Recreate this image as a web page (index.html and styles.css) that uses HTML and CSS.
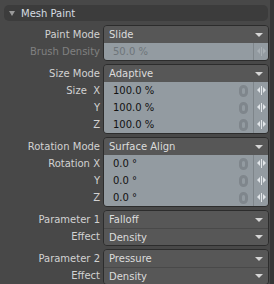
FILE: index.html
```html
<!DOCTYPE html>
<html lang="en">
<head>
    <meta charset="UTF-8">
    <title>Mesh Paint</title>
    <link rel="stylesheet" href="styles.css">
</head>
<body>
    <div class="panel">
        <div class="header"><span class="caret"></span>Mesh Paint</div>

        <div class="group">
            <div class="labels">
                <div class="label">Paint Mode</div>
                <div class="label dim">Brush Density</div>
            </div>
            <div class="box">
                <div class="row drop">Slide<span class="arrow"></span></div>
                <div class="row value disabled">50.0 %<span class="spin"><span class="arrows"></span></span></div>
            </div>
        </div>

        <div class="group">
            <div class="labels">
                <div class="label">Size Mode</div>
                <div class="label">Size&nbsp;&nbsp;X</div>
                <div class="label">Y</div>
                <div class="label">Z</div>
            </div>
            <div class="box">
                <div class="row drop">Adaptive<span class="arrow"></span></div>
                <div class="row value">100.0 %<span class="key"></span><span class="spin"><span class="arrows"></span></span></div>
                <div class="row value">100.0 %<span class="key"></span><span class="spin"><span class="arrows"></span></span></div>
                <div class="row value">100.0 %<span class="key"></span><span class="spin"><span class="arrows"></span></span></div>
            </div>
        </div>

        <div class="group">
            <div class="labels">
                <div class="label">Rotation Mode</div>
                <div class="label">Rotation X</div>
                <div class="label">Y</div>
                <div class="label">Z</div>
            </div>
            <div class="box">
                <div class="row drop">Surface Align<span class="arrow"></span></div>
                <div class="row value">0.0 °<span class="key"></span><span class="spin"><span class="arrows"></span></span></div>
                <div class="row value">0.0 °<span class="key"></span><span class="spin"><span class="arrows"></span></span></div>
                <div class="row value">0.0 °<span class="key"></span><span class="spin"><span class="arrows"></span></span></div>
            </div>
        </div>

        <div class="group">
            <div class="labels">
                <div class="label">Parameter 1</div>
                <div class="label">Effect</div>
            </div>
            <div class="box">
                <div class="row drop">Falloff<span class="arrow"></span></div>
                <div class="row drop">Density<span class="arrow"></span></div>
            </div>
        </div>

        <div class="group">
            <div class="labels">
                <div class="label">Parameter 2</div>
                <div class="label">Effect</div>
            </div>
            <div class="box">
                <div class="row drop">Pressure<span class="arrow"></span></div>
                <div class="row drop">Density<span class="arrow"></span></div>
            </div>
        </div>
    </div>
</body>
</html>
```

FILE: styles.css
```css
body {
    margin: 0;
    background-color: #363636;
    font-family: "DejaVu Sans", Verdana, sans-serif;
    font-size: 10px;
}
.panel {
    width: 270px;
    height: 284px;
    background-color: #484848;
    padding-top: 5px;
    box-sizing: border-box;
}
.header {
    display: flex;
    align-items: center;
    height: 16px;
    margin: 0 2px 4px 4px;
    padding-left: 5px;
    border-radius: 5px;
    background-color: #3c3c3c;
    color: #d6dce2;
}
.caret {
    width: 0;
    height: 0;
    margin-right: 6px;
    border-left: 3px solid transparent;
    border-right: 3px solid transparent;
    border-top: 5px solid #9a9a9a;
}
.group {
    display: flex;
    margin-bottom: 3px;
}
.labels {
    width: 100px;
    padding-top: 1px;
    margin-right: 3px;
}
.label {
    height: 17px;
    line-height: 17px;
    text-align: right;
    color: #d2d2d2;
    white-space: nowrap;
}
.label.dim {
    color: #808080;
}
.box {
    width: 164px;
    border: 1px solid #2c2c2c;
    border-radius: 4px;
    overflow: hidden;
}
.row {
    display: flex;
    align-items: center;
    height: 17px;
}
.drop {
    padding: 0 5px 0 5px;
    background-color: #575757;
    color: #dcdcdc;
}
.drop + .drop {
    height: 16px;
    border-top: 1px solid #494949;
}
.arrow {
    width: 0;
    height: 0;
    margin-left: auto;
    border-left: 4px solid transparent;
    border-right: 4px solid transparent;
    border-top: 4px solid #d6d6d6;
}
.value {
    padding-left: 9px;
    background-color: #939ba1;
    color: #121212;
}
.value.disabled {
    color: #6e757a;
}
.key {
    width: 3px;
    height: 6px;
    margin-left: auto;
    margin-right: 5px;
    border: 3px solid #7f868c;
    border-radius: 5px;
}
.spin {
    display: flex;
    align-items: center;
    justify-content: center;
    width: 14px;
    height: 17px;
    border-left: 1px solid #7e858a;
}
.disabled .spin {
    margin-left: auto;
}
.arrows {
    position: relative;
    width: 1px;
    height: 9px;
    background-color: #e2e6e9;
}
.disabled .arrows {
    background-color: #a9b0b5;
}
.arrows::before,
.arrows::after {
    content: "";
    position: absolute;
    top: 1px;
    border-top: 3.5px solid transparent;
    border-bottom: 3.5px solid transparent;
}
.arrows::before {
    right: 2px;
    border-right: 3px solid #e2e6e9;
}
.arrows::after {
    left: 2px;
    border-left: 3px solid #e2e6e9;
}
.disabled .arrows::before {
    border-right-color: #a9b0b5;
}
.disabled .arrows::after {
    border-left-color: #a9b0b5;
}
```
